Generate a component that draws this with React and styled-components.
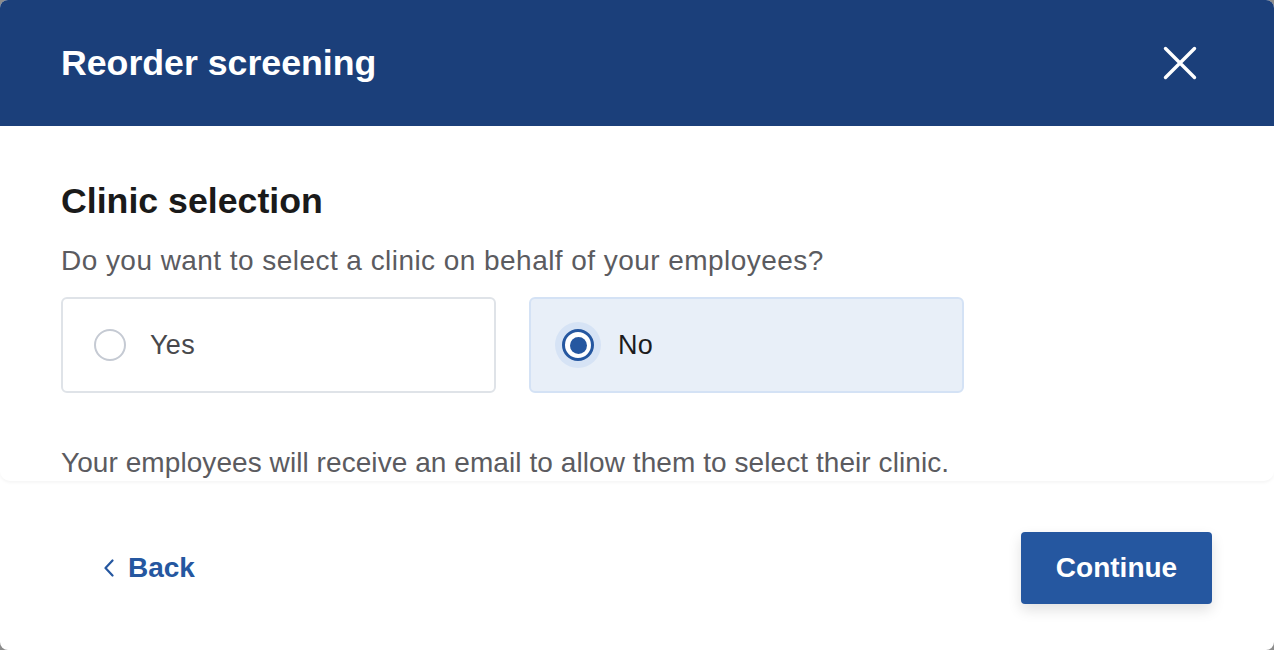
import React, { useState } from "react";
import styled, { createGlobalStyle } from "styled-components";

const GlobalStyle = createGlobalStyle`
  html, body {
    margin: 0;
    padding: 0;
    background: #8c8c8c;
  }
  body {
    font-family: "Liberation Sans", Arial, sans-serif;
  }
`;

const Modal = styled.div`
  width: 1274px;
  height: 650px;
  background: #ffffff;
  border-radius: 8px;
  overflow: hidden;
  display: flex;
  flex-direction: column;
`;

const Header = styled.header`
  height: 126px;
  flex-shrink: 0;
  background: #1b3f7a;
  display: flex;
  align-items: center;
  justify-content: space-between;
  padding: 0 74px 0 61px;
  box-sizing: border-box;

  h1 {
    margin: 0;
    color: #ffffff;
    font-size: 35.7px;
    font-weight: 700;
  }
`;

const CloseButton = styled.button`
  background: none;
  border: 0;
  padding: 0;
  width: 40px;
  height: 40px;
  display: flex;
  align-items: center;
  justify-content: center;
  cursor: pointer;
`;

const Body = styled.section`
  height: 355px;
  flex-shrink: 0;
  box-sizing: border-box;
  padding: 54px 61px 0;
  border-radius: 0 0 10px 10px;
  box-shadow: 0 2px 3px rgba(0, 0, 0, 0.04);
`;

const Title = styled.h2`
  margin: 0;
  font-size: 35.7px;
  line-height: 43px;
  font-weight: 700;
  color: #1a1a1a;
`;

const Text = styled.p`
  margin: ${(p) => p.$margin || "0"};
  font-size: 28px;
  line-height: 36px;
  letter-spacing: ${(p) => p.$spacing || "0.2px"};
  color: #5b5b60;
`;

const Options = styled.div`
  display: flex;
  gap: 33px;
  margin-top: 18px;
`;

const Option = styled.label`
  width: 435px;
  height: 96px;
  box-sizing: border-box;
  display: flex;
  align-items: center;
  gap: 24px;
  padding-left: 31px;
  border-radius: 6px;
  border: 2px solid ${(p) => (p.$selected ? "#d4e2f5" : "#dfe3e8")};
  background: ${(p) => (p.$selected ? "#e8eff8" : "#ffffff")};
  cursor: pointer;
`;

const Radio = styled.span`
  width: 32px;
  height: 32px;
  box-sizing: border-box;
  border-radius: 50%;
  flex-shrink: 0;
  border: ${(p) => (p.$checked ? "3.5px solid #2557a0" : "2px solid #c5cad3")};
  background: #ffffff;
  box-shadow: ${(p) => (p.$checked ? "0 0 0 7px #d6e3f5" : "none")};
  display: flex;
  align-items: center;
  justify-content: center;

  &::after {
    content: "";
    display: ${(p) => (p.$checked ? "block" : "none")};
    width: 17px;
    height: 17px;
    border-radius: 50%;
    background: #2557a0;
  }
`;

const OptionLabel = styled.span`
  font-size: 27px;
  letter-spacing: 0.3px;
  color: ${(p) => (p.$selected ? "#1c1c1e" : "#48484c")};
`;

const Footer = styled.footer`
  flex: 1;
  display: flex;
  align-items: flex-start;
  justify-content: space-between;
  padding: 51px 62px 0 104px;
`;

const BackButton = styled.button`
  background: none;
  border: 0;
  padding: 0;
  height: 72px;
  display: flex;
  align-items: center;
  gap: 14px;
  color: #2557a0;
  font-family: inherit;
  font-size: 28px;
  font-weight: 700;
  cursor: pointer;
`;

const PrimaryButton = styled.button`
  width: 191px;
  height: 72px;
  border: 0;
  border-radius: 4px;
  background: #2557a0;
  color: #ffffff;
  font-family: inherit;
  font-size: 28px;
  font-weight: 700;
  box-shadow: 0 6px 14px rgba(0, 0, 0, 0.12);
  cursor: pointer;
`;

const choices = ["Yes", "No"];

export default function App() {
  const [value, setValue] = useState("No");

  return (
    <>
      <GlobalStyle />
      <Modal>
        <Header>
          <h1>Reorder screening</h1>
          <CloseButton aria-label="Close">
            <svg width="34" height="34" viewBox="0 0 34 34">
              <path
                d="M2.5 2.5 L31.5 31.5 M31.5 2.5 L2.5 31.5"
                stroke="#ffffff"
                strokeWidth="3.4"
                strokeLinecap="round"
              />
            </svg>
          </CloseButton>
        </Header>
        <Body>
          <Title>Clinic selection</Title>
          <Text $margin="20px 0 0" $spacing="0.45px">
            Do you want to select a clinic on behalf of your employees?
          </Text>
          <Options>
            {choices.map((c) => (
              <Option
                key={c}
                $selected={value === c}
                onClick={() => setValue(c)}
              >
                <Radio $checked={value === c} />
                <OptionLabel $selected={value === c}>{c}</OptionLabel>
              </Option>
            ))}
          </Options>
          <Text $margin="52px 0 0" $spacing="0.07px">
            Your employees will receive an email to allow them to select their
            clinic.
          </Text>
        </Body>
        <Footer>
          <BackButton>
            <svg width="10" height="18" viewBox="0 0 10 18">
              <path
                d="M8.5 1.5 L1.5 9 L8.5 16.5"
                fill="none"
                stroke="#2557a0"
                strokeWidth="2.2"
                strokeLinecap="round"
                strokeLinejoin="round"
              />
            </svg>
            Back
          </BackButton>
          <PrimaryButton>Continue</PrimaryButton>
        </Footer>
      </Modal>
    </>
  );
}
